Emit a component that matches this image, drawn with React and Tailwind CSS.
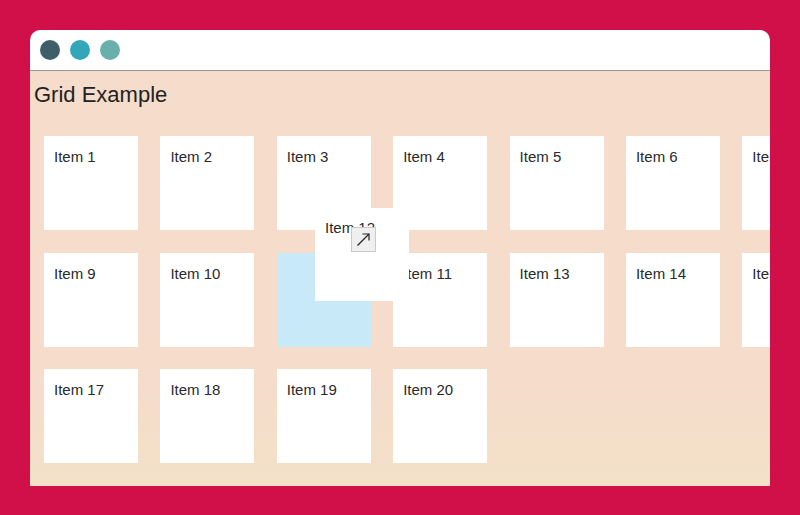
const order = [
  "Item 1", "Item 2", "Item 3", "Item 4", "Item 5", "Item 6", "Item 7", "Item 8",
  "Item 9", "Item 10", null, "Item 11", "Item 13", "Item 14", "Item 15", "Item 16",
  "Item 17", "Item 18", "Item 19", "Item 20",
];

function Card({ label }) {
  if (!label) return <div className="w-[94px] h-[94px] bg-[#c8e9f7]" />;
  return (
    <div className="w-[94px] h-[94px] bg-white px-2.5 pt-[10px] text-[15px] text-[#2a2a2a]">
      {label}
    </div>
  );
}

export default function App() {
  return (
    <div className="w-[800px] h-[515px] bg-[#d1104a] pt-[30px] px-[30px] font-['Liberation_Sans',Arial,sans-serif]">
      <div className="relative w-[740px] h-[456px] flex flex-col overflow-hidden rounded-t-[10px] bg-white">
        <div className="h-[41px] shrink-0 flex items-center gap-[10px] pl-[10px] border-b border-[#999]">
          <span className="w-5 h-5 rounded-full bg-[#3e5f69]" />
          <span className="w-5 h-5 rounded-full bg-[#33a6ba]" />
          <span className="w-5 h-5 rounded-full bg-[#69b0ad]" />
        </div>
        <div className="flex-1 bg-gradient-to-b from-[#f5dccb] from-75% to-[#f3e1c8] overflow-hidden">
          <h1 className="pl-1 pt-[10px] text-[22px] leading-[28px] text-[#222]">Grid Example</h1>
          <div className="mt-[27px] ml-[14px] grid grid-cols-[repeat(8,94px)] gap-x-[22.4px] gap-y-[22.6px] w-max">
            {order.map((l, i) => (
              <Card key={i} label={l} />
            ))}
          </div>
        </div>
        <div className="absolute left-[285px] top-[178px] w-[94px] h-[93px] bg-white px-2.5 pt-[9px] text-[15px] text-[#2a2a2a]">
          Item 12
          <div className="absolute left-[36px] top-[19px] w-[25px] h-[25px] bg-[#efefef] border border-[#c9c9c9] flex items-center justify-center">
            <svg width="17" height="17" viewBox="0 0 17 17" fill="none" stroke="#222" strokeWidth="1.2">
              <path d="M2.5 14.5 L14 3" />
              <path d="M7.5 3 H14 V9.5" />
            </svg>
          </div>
        </div>
      </div>
    </div>
  );
}
